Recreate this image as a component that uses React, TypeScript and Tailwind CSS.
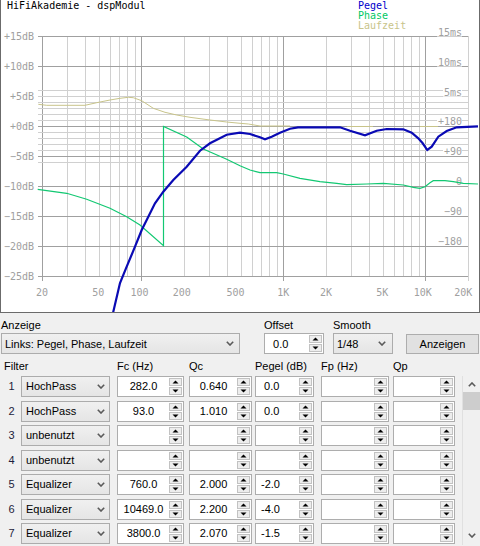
import React from 'react';

// frequency -> x pixel (log scale, 20 Hz .. 20 kHz)
const fx = (f: number) => 42 + 142 * Math.log10(f / 20);
const px = (v: number) => Math.round(v) + 0.5;
const dy = (db: number) => 126 - 6 * db;

const FREQS: number[] = [];
[10, 100, 1000, 10000].forEach((dec) => {
  for (let m = 1; m <= 9; m++) {
    const f = dec * m;
    if (f >= 20 && f <= 20000) FREQS.push(f);
  }
});
const MAJOR_F = [20, 100, 1000, 10000];

const DB_MAJOR = [15, 10, 0, -5, -10, -15, -20, -25];
const DB_MINOR = [6, 5, 4, 3, 2, 1, -1, -2, -3, -4, -6];
const DB_LABELS = [15, 10, 5, 0, -5, -10, -15, -20, -25];

const RIGHT_LABELS: [string, number][] = [
  ['15ms', 31.5],
  ['10ms', 61.5],
  ['5ms', 91.5],
  ['+180', 120.5],
  ['+90', 150.5],
  ['0', 180.5],
  ['\u221290', 210.5],
  ['\u2212180', 240.5],
];

const X_LABELS: [string, number][] = [
  ['20', 42],
  ['50', 98.3],
  ['100', 139.5],
  ['200', 181.7],
  ['500', 235.5],
  ['1K', 283.3],
  ['2K', 326],
  ['5K', 382.3],
  ['10K', 422.7],
  ['20K', 463.3],
];

const PEGEL = [
  [113, 313], [120, 283], [126.7, 266.7], [135, 246.7], [141.7, 230], [146.7, 220], [155, 203.3],
  [163.3, 191.7], [173.3, 180], [186.7, 166.7], [200, 150.7], [210, 143.3], [226.7, 134.7],
  [240, 132.7], [250, 134], [260, 137.3], [265, 139.3], [271.7, 136.7], [280, 132.7], [290, 128.7],
  [298, 127.3], [340, 127.3], [350, 130.7], [365, 135.3], [376.7, 130.7], [386.7, 129], [403.3, 129.3],
  [411.7, 132.7], [418.3, 138.3], [422.7, 143.3], [427.3, 150], [431.7, 146.7], [438.3, 136.7],
  [446.7, 131], [456.7, 127.3], [478, 126.3],
];

const PHASE = [
  [37.7, 189.3], [66.7, 193.3], [86.7, 199.3], [110, 208.3], [126.7, 216.7], [140, 225], [163.5, 245.7],
  [163.5, 126.5], [186.7, 137], [203.3, 149], [226.7, 159.3], [240, 165.7], [250, 170], [260, 172.7],
  [276.7, 172.7], [283.3, 174], [300, 178.3], [320, 181.7], [336.7, 183.3], [346.7, 184.7], [366.7, 184],
  [383.3, 183.3], [403.3, 185], [413.3, 187.3], [420, 188.3], [425, 186.7], [430, 182.7], [433.3, 180.7],
  [445, 180.7], [453.3, 181.7], [463.3, 183.3], [478, 184],
];

const LAUFZEIT = [
  [38.3, 104.3], [46.7, 105.3], [85, 105.3], [96.7, 102.7], [110, 100], [120, 98.3], [128.3, 97.3],
  [133.3, 97.7], [141.7, 100.7], [153.3, 108.3], [165, 112.3], [176.7, 115], [190, 117.3], [210, 120],
  [226.7, 122], [240, 123.3], [248.3, 124], [260, 126], [290, 126],
];

const pts = (a: number[][]) => a.map(([x, y]) => `${x},${y}`).join(' ');

const MONO = "'DejaVu Sans Mono', monospace";

const Chart = () => (
  <svg width={478} height={312} viewBox="1 0 478 312" className="block" fontFamily={MONO} fontSize={10}>
    {/* vertical grid */}
    {FREQS.map((f) => {
      const major = MAJOR_F.includes(f);
      const x = px(fx(f));
      return (
        <line
          key={f}
          x1={x}
          x2={x}
          y1={36}
          y2={major || f === 20000 ? 281 : 276}
          stroke={major ? '#a0a0a0' : '#d0d0d0'}
          shapeRendering="crispEdges"
        />
      );
    })}
    {/* horizontal grid */}
    {DB_MINOR.map((d) => (
      <line key={'n' + d} x1={38} x2={468} y1={dy(d) + 0.5} y2={dy(d) + 0.5} stroke="#d0d0d0" shapeRendering="crispEdges" />
    ))}
    {DB_MAJOR.map((d) => (
      <line key={'j' + d} x1={38} x2={468} y1={dy(d) + 0.5} y2={dy(d) + 0.5} stroke="#a0a0a0" shapeRendering="crispEdges" />
    ))}

    {/* left dB labels */}
    {DB_LABELS.map((d) => (
      <text key={'l' + d} x={34} y={dy(d) + 4} textAnchor="end" fill="#a0a0a0">
        {(d < 0 ? '\u2212' : '+') + Math.abs(d) + 'dB'}
      </text>
    ))}

    {/* right labels: time / phase */}
    {RIGHT_LABELS.map(([t, y]) => (
      <g key={t}>
        <rect x={461 - t.length * 6} y={y - 5} width={t.length * 6 + 1} height={10} fill="#fff" />
        <text x={462} y={y + 4} textAnchor="end" fill="#a0a0a0">
          {t}
        </text>
      </g>
    ))}

    {/* frequency labels */}
    {X_LABELS.map(([t, x]) => (
      <text key={t} x={x} y={296} textAnchor="middle" fill="#a0a0a0">
        {t}
      </text>
    ))}

    {/* curves */}
    <polyline points={pts(LAUFZEIT)} fill="none" stroke="#c8c48a" strokeWidth={1} />
    <line x1={347} x2={373} y1={126.5} y2={126.5} stroke="#c8c48a" shapeRendering="crispEdges" />
    <line x1={420} x2={438} y1={126.5} y2={126.5} stroke="#c8c48a" shapeRendering="crispEdges" />
    <polyline points={pts(PHASE)} fill="none" stroke="#12c872" strokeWidth={1.2} />
    <polyline points={pts(PEGEL)} fill="none" stroke="#0a0ab4" strokeWidth={2.2} />

    {/* title + legend */}
    <text x={7} y={9} fill="#000">
      HiFiAkademie - dspModul
    </text>
    <text x={358} y={9} fill="#0000cc">
      Pegel
    </text>
    <text x={358} y={19} fill="#00c864">
      Phase
    </text>
    <text x={358} y={29} fill="#c8c48a">
      Laufzeit
    </text>
  </svg>
);

const Chevron = () => (
  <svg width="8" height="5" viewBox="0 0 8 5" className="shrink-0">
    <polyline points="0.8,0.8 4,4 7.2,0.8" fill="none" stroke="#5a5a5a" strokeWidth="1.6" />
  </svg>
);

const Arrow = ({ up }: { up?: boolean }) => (
  <svg width="7" height="4" viewBox="0 0 7 4">
    <polygon points={up ? '0.5,3.5 3.5,0.5 6.5,3.5' : '0.5,0.5 6.5,0.5 3.5,3.5'} fill="#000" />
  </svg>
);

const SpinBox = ({ value, textClass }: { value?: string; textClass: string }) => (
  <div className="flex h-[21px] w-full border border-[#adadad] bg-white">
    <div className={`flex flex-1 items-center whitespace-pre ${textClass}`}>{value}</div>
    <div className="flex w-[14px] flex-col gap-[1px] py-[1px] pr-[1px]">
      <div className="flex flex-1 items-center justify-center border border-[#c2c2c2] bg-[#ededed]">
        <Arrow up />
      </div>
      <div className="flex flex-1 items-center justify-center border border-[#c2c2c2] bg-[#ededed]">
        <Arrow />
      </div>
    </div>
  </div>
);

const Combo = ({ label, padClass }: { label: string; padClass: string }) => (
  <div
    className={`flex h-[21px] w-full items-center justify-between border border-[#acacac] bg-gradient-to-b from-[#f0f0f0] to-[#e5e5e5] ${padClass}`}
  >
    <span>{label}</span>
    <Chevron />
  </div>
);

type Row = { typ: string; fc?: string; qc?: string; pegel?: string };

const ROWS: Row[] = [
  { typ: 'HochPass', fc: '282.0', qc: '0.640', pegel: ' 0.0' },
  { typ: 'HochPass', fc: '93.0', qc: '1.010', pegel: ' 0.0' },
  { typ: 'unbenutzt' },
  { typ: 'unbenutzt' },
  { typ: 'Equalizer', fc: '760.0', qc: '2.000', pegel: '-2.0' },
  { typ: 'Equalizer', fc: '10469.0', qc: '2.200', pegel: '-4.0' },
  { typ: 'Equalizer', fc: '3800.0', qc: '2.070', pegel: '-1.5' },
];

export default function App() {
  return (
    <div className="h-[546px] w-[480px] overflow-hidden bg-[#f0f0f0] font-['Liberation_Sans',Arial,sans-serif] text-[11px] text-black">
      {/* chart panel */}
      <div className="h-[313px] border-x border-b border-[#6b6b6b] bg-white">
        <Chart />
      </div>

      {/* display controls */}
      <div className="flex pt-[5px] leading-[14px]">
        <div className="ml-[1px] flex w-[239px] flex-col">
          <span className="h-[15px]">Anzeige</span>
          <Combo label="Links: Pegel, Phase, Laufzeit" padClass="pl-[3px] pr-[5px]" />
        </div>
        <div className="ml-[24px] flex w-[60px] flex-col">
          <span className="h-[15px]">Offset</span>
          <SpinBox value=" 0.0" textClass="pl-[5px]" />
        </div>
        <div className="ml-[9px] flex w-[60px] flex-col">
          <span className="h-[15px]">Smooth</span>
          <Combo label="1/48" padClass="pl-[3px] pr-[6px]" />
        </div>
        <div className="ml-[13px] flex w-[73px] flex-col pt-[16px]">
          <button className="h-[20px] border border-[#adadad] bg-[#e1e1e1] text-[11px]">Anzeigen</button>
        </div>
      </div>

      {/* filter table header */}
      <div className="flex h-[22px] pt-[5px] leading-[14px]">
        <span className="w-[117px] pl-[4px]">Filter</span>
        <span className="w-[72px]">Fc (Hz)</span>
        <span className="w-[66px]">Qc</span>
        <span className="w-[66px]">Pegel (dB)</span>
        <span className="w-[72px]">Fp (Hz)</span>
        <span>Qp</span>
      </div>

      {/* filter rows + scrollbar */}
      <div className="flex h-[169px]">
        <div className="flex w-[462px] flex-col">
          {ROWS.map((r, i) => (
            <div key={i} className={`flex shrink-0 ${i % 2 === 0 ? 'h-[25px]' : 'h-[24px]'}`}>
              <span className="flex h-[21px] w-[21px] items-center justify-center pl-[2px] text-[#1c1c3c]">{i + 1}</span>
              <div className="w-[89px]">
                <Combo label={r.typ} padClass="pl-[4px] pr-[4px]" />
              </div>
              <div className="ml-[7px] w-[67px]">
                <SpinBox value={r.fc} textClass="justify-center" />
              </div>
              <div className="ml-[5px] w-[63px]">
                <SpinBox value={r.qc} textClass="justify-center" />
              </div>
              <div className="ml-[3px] w-[59px]">
                <SpinBox value={r.pegel} textClass="pl-[5px]" />
              </div>
              <div className="ml-[7px] w-[68px]">
                <SpinBox textClass="" />
              </div>
              <div className="ml-[4px] w-[62px]">
                <SpinBox textClass="" />
              </div>
            </div>
          ))}
        </div>
        <div className="flex w-[18px] flex-col border-l border-[#e0e0e0]">
          <div className="flex h-[16px] items-center justify-center">
            <svg width="8" height="5" viewBox="0 0 8 5">
              <polyline points="0.8,4.2 4,1 7.2,4.2" fill="none" stroke="#5a5a5a" strokeWidth="1.6" />
            </svg>
          </div>
          <div className="h-[18px] bg-[#cdcdcd]" />
          <div className="flex-1" />
          <div className="flex h-[20px] items-center justify-center">
            <Chevron />
          </div>
        </div>
      </div>
    </div>
  );
}
